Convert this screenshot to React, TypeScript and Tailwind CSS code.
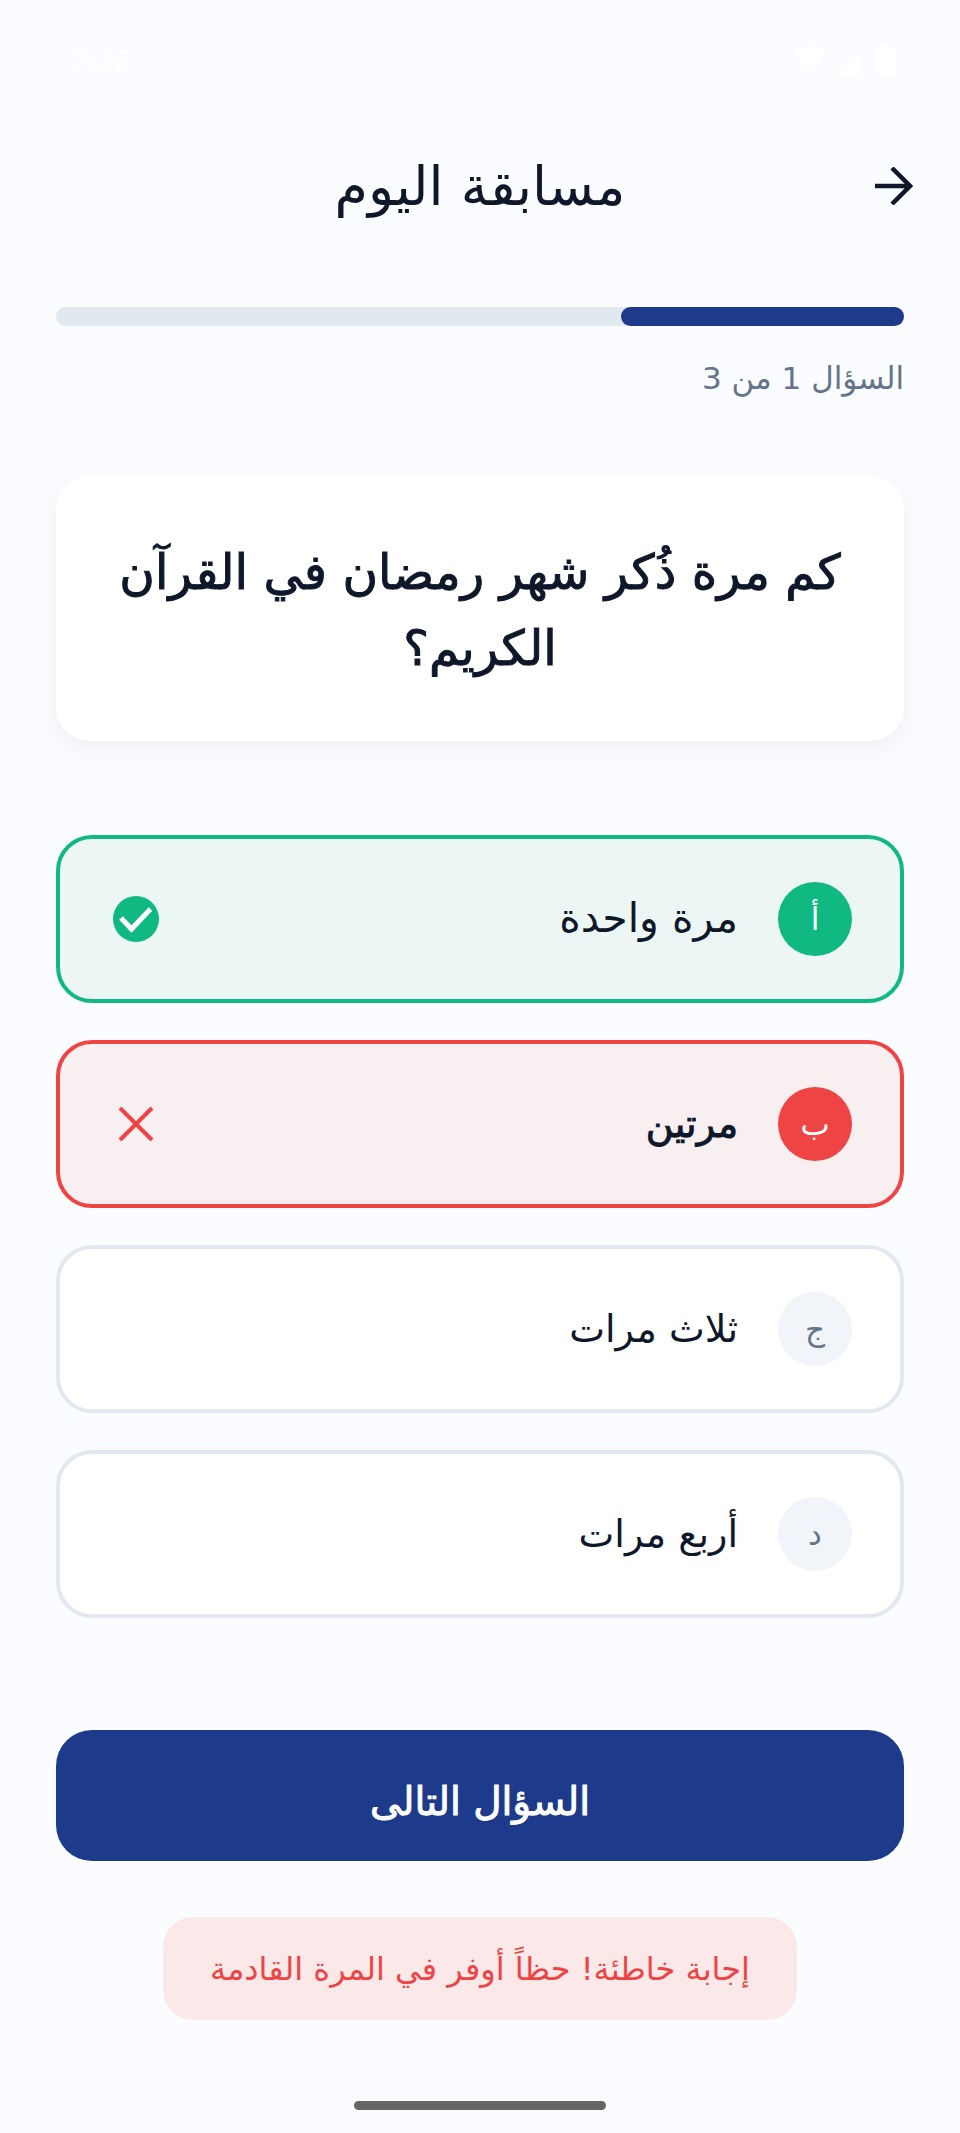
const options = [
  { letter: 'أ', text: 'مرة واحدة', state: 'correct' },
  { letter: 'ب', text: 'مرتين', state: 'wrong' },
  { letter: 'ج', text: 'ثلاث مرات', state: 'idle' },
  { letter: 'د', text: 'أربع مرات', state: 'idle' },
];

const styles: Record<string, { box: string; badge: string; label: string }> = {
  correct: { box: 'border-[#10b981] bg-[#ecf6f4]', badge: 'bg-[#10b981] text-white', label: 'text-[41px]' },
  wrong: { box: 'border-[#ef4444] bg-[#f8eff1]', badge: 'bg-[#ef4444] text-white', label: 'text-[38px] [-webkit-text-stroke:1px_#0f172a]' },
  idle: { box: 'border-[#e2e8f0] bg-white', badge: 'bg-[#f1f5f9] text-[#64748b]', label: 'text-[38px]' },
};

function CheckIcon() {
  return (
    <svg width="46" height="46" viewBox="0 0 46 46">
      <circle cx="23" cy="23" r="23" fill="#10b981" />
      <path d="M8 22l10.5 11L37.5 13" fill="none" stroke="white" strokeWidth="5" />
    </svg>
  );
}

function CrossIcon() {
  return (
    <svg width="46" height="46" viewBox="0 0 46 46">
      <path d="M7 7l32 32M39 7L7 39" fill="none" stroke="#ef4444" strokeWidth="4" />
    </svg>
  );
}

export default function App() {
  return (
    <div dir="rtl" className="h-[2133px] bg-[#fafcff] px-14 text-[#0f172a] font-['DejaVu_Sans',sans-serif] overflow-hidden">
      {/* status bar, white on a near white page */}
      <div dir="ltr" className="flex h-[124px] items-start justify-between pt-[44px] text-[26px] leading-[36px] text-white">
        <span className="pl-4">2:26</span>
        <svg width="110" height="34" viewBox="0 0 110 34" fill="white">
          <path d="M0 8c9-8 24-8 33 0L16.500 30z" />
          <path d="M66 6v26H41z" />
          <rect x="83" y="2" width="18" height="30" rx="3" />
        </svg>
      </div>

      {/* header */}
      <div className="relative flex h-[126px] items-center justify-center">
        <h1 className="text-[54px] font-normal leading-none">مسابقة اليوم</h1>
        <svg className="absolute right-[-9px] top-[43px]" width="38" height="38" viewBox="0 0 38 38" fill="none" stroke="#0f172a" strokeWidth="4.5">
          <path d="M0 19h35M17 1l18 18-18 18" />
        </svg>
      </div>

      {/* progress */}
      <div className="mt-[57px] h-[19px] rounded-full bg-[#e2e8f0]">
        <div className="h-full w-1/3 rounded-full bg-[#1e3a8a]" />
      </div>
      <p className="mt-[34px] text-[31px] leading-[36px] text-[#64748b]">السؤال 1 من 3</p>

      {/* question */}
      <div className="mt-[79px] flex h-[266px] items-center justify-center rounded-[34px] bg-white px-8 pt-1 shadow-[0_8px_24px_rgba(15,23,42,0.05)]">
        <h2 className="text-center text-[48.500px] font-normal leading-[76px] [-webkit-text-stroke:1px_#0f172a]">كم مرة ذُكر شهر رمضان في القرآن الكريم؟</h2>
      </div>

      {/* options */}
      <div className="mt-[94px] flex flex-col gap-[37px]">
        {options.map((o) => (
          <div key={o.letter} className={`flex h-[168px] items-center justify-between rounded-[36px] border-4 pl-[53px] pr-[48px] ${styles[o.state].box}`}>
            <div className="flex items-center gap-10">
              <div className={`flex h-[74px] w-[74px] items-center justify-center rounded-full text-[31px] ${styles[o.state].badge}`}>{o.letter}</div>
              <span className={styles[o.state].label}>{o.text}</span>
            </div>
            {o.state === 'correct' && <CheckIcon />}
            {o.state === 'wrong' && <CrossIcon />}
          </div>
        ))}
      </div>

      {/* next */}
      <button className="mt-[112px] flex h-[131px] w-full items-center justify-center rounded-[36px] bg-[#1e3a8a] pt-[14px] text-[39px] font-normal text-white [-webkit-text-stroke:1px_#ffffff]">السؤال التالى</button>

      <div className="mt-[56px] flex justify-center">
        <div className="flex h-[103px] w-[634px] items-center justify-center rounded-[30px] bg-[#fbe9ea] text-[32px] text-[#ef4444]">إجابة خاطئة! حظاً أوفر في المرة القادمة</div>
      </div>

      <div className="mx-auto mt-[81px] h-[9px] w-[252px] rounded-full bg-[#666666]" />
    </div>
  );
}
